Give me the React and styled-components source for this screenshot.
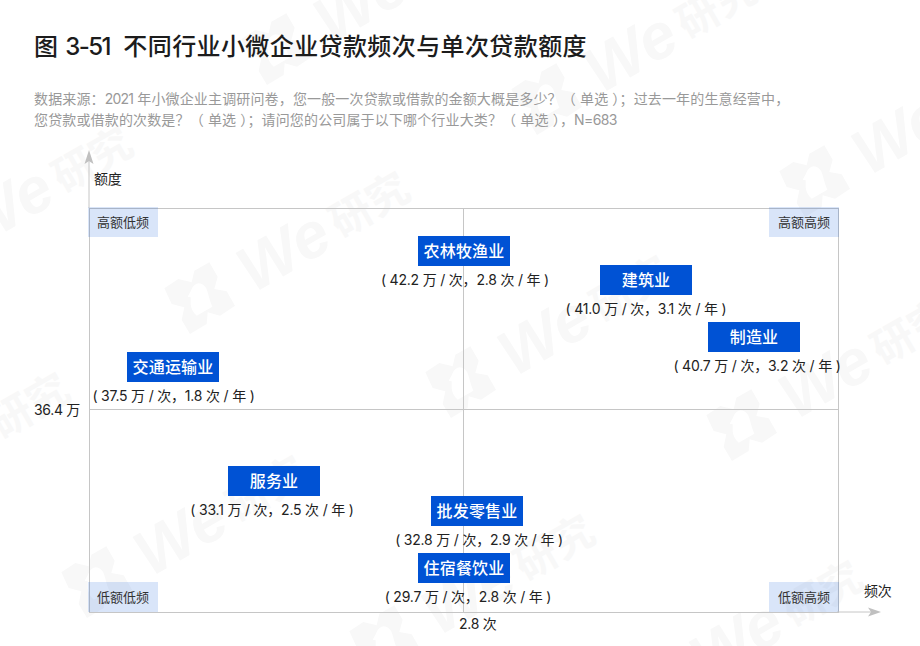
import React from 'react';
import styled, { createGlobalStyle } from 'styled-components';

const FONT = '"Inter", "Noto Sans CJK SC", sans-serif';

const GlobalStyle = createGlobalStyle`
  html, body {
    margin: 0;
    padding: 0;
    background: #fff;
  }
  body {
    font-family: ${FONT};
  }
`;

const Page = styled.div`
  position: relative;
  width: 920px;
  height: 646px;
  box-sizing: border-box;
  padding: 30px 0 0 34px;
  overflow: hidden;
  background: #fff;
`;

const Title = styled.h1`
  position: relative;
  margin: 0;
  font-size: 24px;
  line-height: 34px;
  font-weight: 500;
  letter-spacing: 0.4px;
  color: #1c1c1c;
  white-space: pre;
`;

const Latin = styled.span`
  letter-spacing: ${(p) => p.$tight}px;
`;

const Source = styled.p`
  position: relative;
  margin: 24px 0 0;
  font-size: 14px;
  line-height: 21px;
  letter-spacing: 0.15px;
  color: #999;
  white-space: nowrap;
`;

const Plot = styled.div`
  position: relative;
  width: 750px;
  height: 405px;
  margin: 78px 0 0 55px;
  box-sizing: border-box;
  border: 1px solid #c6c6c6;
  display: grid;
  grid-template-columns: 374px 1fr;
  grid-template-rows: 201px 1fr;
`;

const Quadrant = styled.div`
  border-right: ${(p) => (p.$right ? '1px solid #c6c6c6' : 'none')};
  border-bottom: ${(p) => (p.$bottom ? '1px solid #c6c6c6' : 'none')};
`;

const CornerTag = styled.span`
  position: absolute;
  ${(p) => (p.$top ? 'top: -2px;' : 'bottom: 0;')}
  ${(p) => (p.$left ? 'left: -2px;' : 'right: -1px;')}
  width: 70px;
  height: 30px;
  box-sizing: border-box;
  padding-bottom: 2px;
  display: flex;
  align-items: center;
  justify-content: center;
  background: rgba(0, 82, 217, 0.15);
  font-size: 13px;
  color: #333;
`;

const AxisText = styled.span`
  position: absolute;
  left: ${(p) => p.$x}px;
  top: ${(p) => p.$y}px;
  font-size: 14px;
  line-height: 20px;
  letter-spacing: -0.3px;
  color: #222;
  white-space: nowrap;
`;

const AxisArrow = styled.svg`
  position: absolute;
  left: ${(p) => p.$x}px;
  top: ${(p) => p.$y}px;
  overflow: visible;
`;

const Point = styled.div`
  position: absolute;
  left: ${(p) => p.$x - 100}px;
  top: ${(p) => p.$y}px;
  width: 200px;
  display: flex;
  flex-direction: column;
  align-items: center;
`;

const Industry = styled.div`
  width: 92px;
  height: 30px;
  box-sizing: border-box;
  padding-bottom: 2px;
  display: flex;
  align-items: center;
  justify-content: center;
  background: #0052d4;
  color: #fff;
  font-size: 16px;
  font-weight: 500;
  letter-spacing: 0.2px;
`;

const Figures = styled.div`
  margin-top: 4px;
  margin-left: ${(p) => p.$shift || 0}px;
  font-size: 14px;
  line-height: 20px;
  letter-spacing: -0.2px;
  color: #222;
  white-space: nowrap;
`;

const Watermarks = styled.div`
  position: absolute;
  inset: 0;
`;

const Mark = styled.div`
  position: absolute;
  left: ${(p) => p.$x - 45}px;
  top: ${(p) => p.$y - 45}px;
  width: 320px;
  height: 90px;
  display: flex;
  align-items: center;
  transform: rotate(-30deg);
  transform-origin: 45px 45px;
  color: #f8f8f8;
`;

const MarkWe = styled.span`
  margin-left: 4px;
  font-family: "Liberation Sans", sans-serif;
  font-size: 64px;
  font-weight: 700;
  font-style: italic;
  line-height: 74px;
`;

const MarkCn = styled.span`
  margin-left: 8px;
  font-family: "Noto Sans CJK SC", sans-serif;
  font-size: 42px;
  font-weight: 700;
  line-height: 74px;
  white-space: nowrap;
`;

function MarkLogo() {
  return (
    <svg width="90" height="90" viewBox="0 0 270 270" style={{ flex: 'none' }}>
      <g transform="rotate(30 135 135)">
        <path
          fill="currentColor"
          fillRule="evenodd"
          d="M28 103 L70 75 L110 85 L118 50 L163 25 L188 68 L178 105 L215 112 L240 155 L195 185 L158 175 L155 210 L105 240 L80 198 L88 160 L50 150 Z M130 88 C145 88 155 100 158 115 L165 140 L172 158 L125 185 C115 175 108 165 107 150 L107 130 L98 128 L108 110 C112 98 120 90 130 88 Z"
        />
      </g>
    </svg>
  );
}

const MARKS = [
  [-77, 254],
  [277, 50],
  [547, 100],
  [815, 182],
  [200, 299],
  [461, 383],
  [742, 426],
  [-140, 500],
  [97, 583],
  [385, 642],
  [653, 688],
];

const POINTS = [
  { name: '农林牧渔业', figures: '( 42.2 万 / 次，2.8 次 / 年 )', x: 374, y: 27, shift: 2 },
  { name: '建筑业', figures: '( 41.0 万 / 次，3.1 次 / 年 )', x: 556, y: 56, shift: 0 },
  { name: '制造业', figures: '( 40.7 万 / 次，3.2 次 / 年 )', x: 664, y: 113, shift: 6 },
  { name: '交通运输业', figures: '( 37.5 万 / 次，1.8 次 / 年 )', x: 83, y: 143, shift: 1 },
  { name: '服务业', figures: '( 33.1 万 / 次，2.5 次 / 年 )', x: 184, y: 257, shift: -4 },
  { name: '批发零售业', figures: '( 32.8 万 / 次，2.9 次 / 年 )', x: 387, y: 287, shift: 4 },
  { name: '住宿餐饮业', figures: '( 29.7 万 / 次，2.8 次 / 年 )', x: 374, y: 344, shift: 8 },
];

export default function App() {
  return (
    <Page>
      <GlobalStyle />
      <Watermarks>
        {MARKS.map(([x, y]) => (
          <Mark key={`${x}-${y}`} $x={x} $y={y}>
            <MarkLogo />
            <MarkWe>We</MarkWe>
            <MarkCn>研究</MarkCn>
          </Mark>
        ))}
      </Watermarks>
      <Title>
        图 <Latin $tight={-1.6}>3-51</Latin>{'  不同行业小微企业贷款频次与单次贷款额度'}
      </Title>
      <Source>
        数据来源：<Latin $tight={-0.8}>2021</Latin> 年小微企业主调研问卷，您一般一次贷款或借款的金额大概是多少？（ 单选 ）；过去一年的生意经营中，
        <br />
        您贷款或借款的次数是？（ 单选 ）；请问您的公司属于以下哪个行业大类？（ 单选 ），<Latin $tight={-0.6}>N=683</Latin>
      </Source>
      <Plot>
        <Quadrant $right $bottom />
        <Quadrant $bottom />
        <Quadrant $right />
        <Quadrant />
        <CornerTag $top $left>高额低频</CornerTag>
        <CornerTag $top>高额高频</CornerTag>
        <CornerTag $left>低额低频</CornerTag>
        <CornerTag>低额高频</CornerTag>
        <AxisArrow $x={-7} $y={-59} width="12" height="58" viewBox="0 0 12 58">
          <path d="M6 10 V58" stroke="#c6c6c6" strokeWidth="1" />
          <path d="M6 0 L10.5 14 L6 11 L1.5 14 Z" fill="#c0c0c0" />
        </AxisArrow>
        <AxisArrow $x={747} $y={397} width="44" height="12" viewBox="0 0 44 12">
          <path d="M0 6 H34" stroke="#c6c6c6" strokeWidth="1" />
          <path d="M44 6 L31 1.5 L34 6 L31 10.5 Z" fill="#c0c0c0" />
        </AxisArrow>
        <AxisText $x={4} $y={-40}>额度</AxisText>
        <AxisText $x={774} $y={372}>频次</AxisText>
        <AxisText $x={-56} $y={191}>36.4 万</AxisText>
        <AxisText $x={369} $y={405}>2.8 次</AxisText>
        {POINTS.map((p) => (
          <Point key={p.name} $x={p.x} $y={p.y}>
            <Industry>{p.name}</Industry>
            <Figures $shift={p.shift}>{p.figures}</Figures>
          </Point>
        ))}
      </Plot>
    </Page>
  );
}
